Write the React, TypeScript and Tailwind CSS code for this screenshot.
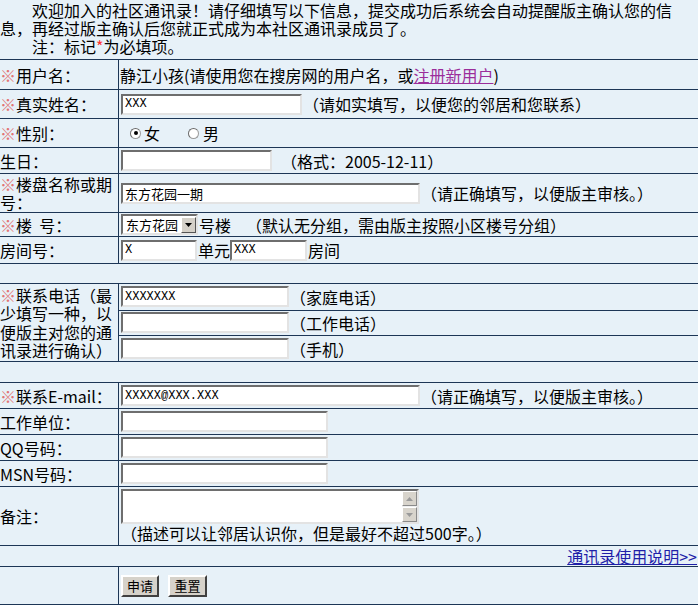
import type { ReactNode } from 'react';

const rule = 'border-[#1d3656]';

function Mark() {
  return <span className="text-[#e27575]">※</span>;
}

function Field({ w, value = '', cjk = false }: { w: string; value?: string; cjk?: boolean }) {
  return (
    <input
      readOnly
      value={value}
      className={`${w} h-[21px] shrink-0 border-2 border-t-[#6e6e6e] border-l-[#6e6e6e] border-r-[#e3e3e3] border-b-[#e3e3e3] bg-white px-[2px] text-black outline-none ${
        cjk ? "text-[13px] font-['Noto_Sans_CJK_SC',sans-serif]" : "text-[12px] font-['Liberation_Mono',monospace]"
      }`}
    />
  );
}

function Radio({ checked = false }: { checked?: boolean }) {
  return (
    <span className="flex h-[11px] w-[11px] items-center justify-center rounded-full border border-[#9b9b9b] border-t-[#6a6a6a] border-l-[#6a6a6a] bg-white">
      {checked && <span className="h-[4px] w-[4px] rounded-full bg-black" />}
    </span>
  );
}

function Row({ h, label, children }: { h: string; label: ReactNode; children: ReactNode }) {
  return (
    <div className={`flex ${h} border-t ${rule}`}>
      <div className={`flex w-[119px] shrink-0 items-center border-r ${rule} leading-[18px]`}>
        <div>{label}</div>
      </div>
      <div className="flex flex-1 items-center pl-[2px]">{children}</div>
    </div>
  );
}

function ScrollBtn({ up = false }: { up?: boolean }) {
  return (
    <span className="flex h-[15px] w-[15px] items-center justify-center border border-t-white border-l-white border-r-[#8a8a8a] border-b-[#8a8a8a] bg-[#d8d4cc]">
      <svg width="7" height="4" viewBox="0 0 7 4">
        <path d={up ? 'M0 4h7L3.5 0z' : 'M0 0h7L3.5 4z'} fill="#9a9a9a" />
      </svg>
    </span>
  );
}

export default function App() {
  return (
    <div className="h-[605px] w-[698px] overflow-hidden bg-[#e7f1f8] font-['Noto_Sans_CJK_SC',sans-serif] text-[16px] text-black">
      <div className="h-[59px] pt-[1px] leading-[18px]">
        {'\u3000\u3000'}欢迎加入的社区通讯录！请仔细填写以下信息，提交成功后系统会自动提醒版主确认您的信
        <br />
        息，再经过版主确认后您就正式成为本社区通讯录成员了。
        <br />
        {'\u3000\u3000'}注：标记<span className="text-[#ff3030]">*</span>为必填项。
      </div>

      <Row h="h-[30px]" label={<><Mark />用户名：</>}>
        <span className="-ml-[1px]">
          静江小孩(请使用您在搜房网的用户名，或
          <a className="text-[#9b2d9b] underline">注册新用户</a>)
        </span>
      </Row>

      <Row h="h-[29px]" label={<><Mark />真实姓名：</>}>
        <Field w="w-[181px]" value="XXX" />
        <span className="ml-[1px]">（请如实填写，以便您的邻居和您联系）</span>
      </Row>

      <Row h="h-[29px]" label={<><Mark />性别：</>}>
        <div className="flex items-center pl-[9px]">
          <Radio checked />
          <span className="ml-[3px]">女</span>
          <span className="ml-[28px]"><Radio /></span>
          <span className="ml-[4px]">男</span>
        </div>
      </Row>

      <Row h="h-[26px]" label="生日：">
        <Field w="w-[151px]" />
        <span className="ml-[9px]">（格式：2005-12-11）</span>
      </Row>

      <Row h="h-[39px]" label={<><Mark />楼盘名称或期号：</>}>
        <Field w="w-[299px]" value="东方花园一期" cjk />
        <span className="ml-[1px]">（请正确填写，以便版主审核。）</span>
      </Row>

      <Row h="h-[24px]" label={<><Mark />楼&nbsp;&nbsp;号：</>}>
        <div className="flex h-[21px] w-[77px] shrink-0 items-center border-2 border-t-[#6e6e6e] border-l-[#6e6e6e] border-r-[#e3e3e3] border-b-[#e3e3e3] bg-white">
          <span className="flex-1 pl-[3px] text-[13px] leading-none">东方花园</span>
          <span className="flex h-[16px] w-[15px] items-center justify-center border border-t-white border-l-white border-r-[#555] border-b-[#555] bg-[#d4d0c8]">
            <svg width="7" height="4" viewBox="0 0 7 4">
              <path d="M0 0h7L3.5 4z" fill="#000" />
            </svg>
          </span>
        </div>
        <span className="ml-[1px]">号楼</span>
        <span className="ml-[15px]">（默认无分组，需由版主按照小区楼号分组）</span>
      </Row>

      <Row h="h-[27px]" label="房间号：">
        <Field w="w-[76px]" value="X" />
        <span className="ml-[1px]">单元</span>
        <Field w="w-[77px]" value="XXX" />
        <span className="ml-[1px]">房间</span>
      </Row>

      <div className={`h-[20px] border-t ${rule}`} />

      <div className={`flex h-[78px] border-t ${rule}`}>
        <div className={`flex w-[119px] shrink-0 items-center border-r ${rule} leading-[18.5px]`}>
          <div><Mark />联系电话（最少填写一种，以便版主对您的通讯录进行确认）</div>
        </div>
        <div className="flex flex-1 flex-col">
          <div className="flex h-[26px] items-center pl-[2px]">
            <Field w="w-[168px]" value="XXXXXXX" />
            <span className="ml-[1px]">（家庭电话）</span>
          </div>
          <div className={`flex h-[26px] items-center border-t ${rule} pl-[2px]`}>
            <Field w="w-[168px]" />
            <span className="ml-[1px]">（工作电话）</span>
          </div>
          <div className={`flex h-[26px] items-center border-t ${rule} pl-[2px]`}>
            <Field w="w-[168px]" />
            <span className="ml-[1px]">（手机）</span>
          </div>
        </div>
      </div>

      <div className={`h-[21px] border-t ${rule}`} />

      <Row h="h-[26px]" label={<><Mark />联系E-mail：</>}>
        <Field w="w-[299px]" value="XXXXX@XXX.XXX" />
        <span className="ml-[1px]">（请正确填写，以便版主审核。）</span>
      </Row>

      <Row h="h-[26px]" label="工作单位：">
        <Field w="w-[207px]" />
      </Row>

      <Row h="h-[26px]" label="QQ号码：">
        <Field w="w-[207px]" />
      </Row>

      <Row h="h-[26px]" label="MSN号码：">
        <Field w="w-[207px]" />
      </Row>

      <div className={`flex h-[59px] border-t ${rule}`}>
        <div className={`flex w-[119px] shrink-0 items-center border-r ${rule}`}>备注：</div>
        <div className="flex flex-1 flex-col pl-[2px] pt-[2px]">
          <div className="flex h-[35px] w-[298px] border-2 border-t-[#6e6e6e] border-l-[#6e6e6e] border-r-[#e3e3e3] border-b-[#e3e3e3] bg-white">
            <div className="flex-1" />
            <div className="flex w-[15px] flex-col justify-between bg-[#f0f0f0]">
              <ScrollBtn up />
              <ScrollBtn />
            </div>
          </div>
          <div className="leading-[19px]">（描述可以让邻居认识你，但是最好不超过500字。）</div>
        </div>
      </div>

      <div className={`flex h-[21px] items-center justify-end border-t ${rule} pr-[1px]`}>
        <a className="text-[#1f1fa8] underline">通讯录使用说明&gt;&gt;</a>
      </div>

      <div className={`flex h-[39px] border-t border-b ${rule}`}>
        <div className={`w-[119px] shrink-0 border-r ${rule}`} />
        <div className="flex flex-1 items-center gap-[9px] pl-[2px]">
          <button className="h-[22px] w-[38px] border-2 border-t-white border-l-white border-r-[#404040] border-b-[#404040] bg-[#d6d2ca] text-[13px] leading-none">
            申请
          </button>
          <button className="h-[22px] w-[39px] border-2 border-t-white border-l-white border-r-[#404040] border-b-[#404040] bg-[#d6d2ca] text-[13px] leading-none">
            重置
          </button>
        </div>
      </div>
    </div>
  );
}
